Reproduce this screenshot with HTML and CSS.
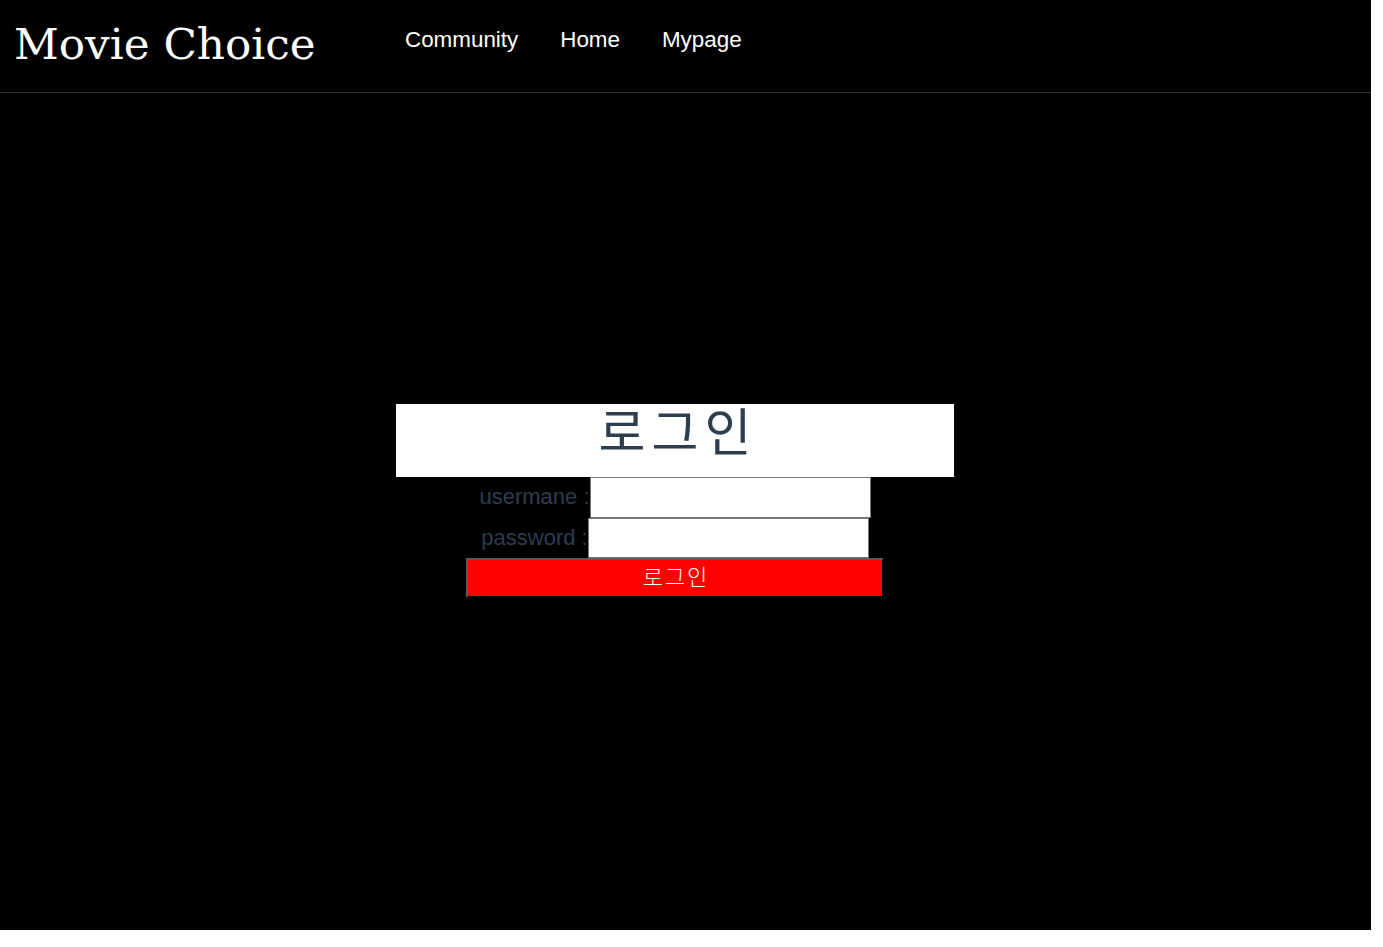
FILE: index.html
```html
<!DOCTYPE html>
<html lang="ko">
<head>
<meta charset="utf-8">
<title>Movie Choice</title>
<link rel="stylesheet" href="styles.css">
</head>
<body>
<div class="app">
  <header class="header">
    <div class="brand">Movie Choice</div>
    <nav class="nav">
      <a class="nav-link" href="#">Community</a>
      <a class="nav-link" href="#">Home</a>
      <a class="nav-link" href="#">Mypage</a>
    </nav>
  </header>
  <main class="main">
    <div class="title-box"><h1 class="title">로그인</h1></div>
    <div class="row">
      <label class="label" for="username">usermane :</label><input class="field" id="username" type="text">
    </div>
    <div class="row">
      <label class="label" for="password">password :</label><input class="field" id="password" type="password">
    </div>
    <button class="submit" type="button">로그인</button>
  </main>
</div>
</body>
</html>
```

FILE: styles.css
```css
html, body {
  margin: 0;
  padding: 0;
  background: #ffffff;
}

.app {
  width: 1371px;
  height: 930px;
  background: #000000;
  overflow: hidden;
}

.header {
  display: flex;
  align-items: flex-start;
  height: 92px;
  border-bottom: 1px solid #333333;
  padding-left: 14px;
  box-sizing: content-box;
}

.brand {
  flex: none;
  width: 301px;
  margin-top: 22px;
  font-family: "DejaVu Serif", "Liberation Serif", serif;
  font-size: 43.7px;
  line-height: 44px;
  color: #ffffff;
  white-space: nowrap;
}

.nav {
  display: flex;
  gap: 42px;
  margin-left: 90px;
  margin-top: 29px;
}

.nav-link {
  font-family: "Liberation Sans", Arial, sans-serif;
  font-size: 22.4px;
  line-height: 22px;
  color: #ffffff;
  text-decoration: none;
}

.main {
  width: 1350px;
  display: flex;
  flex-direction: column;
  align-items: center;
  padding-top: 311px;
}

.title-box {
  width: 558px;
  height: 73px;
  background: #ffffff;
  text-align: center;
}

.title {
  margin: 0;
  padding-left: 6px;
  font-family: "Noto Sans CJK KR", "Noto Sans", sans-serif;
  font-weight: 400;
  font-size: 51px;
  line-height: 50px;
  letter-spacing: 6px;
  color: #2c3e50;
}

.row {
  display: flex;
  align-items: center;
}

.label {
  font-family: "Liberation Sans", Arial, sans-serif;
  font-size: 22px;
  color: #2c3e50;
  white-space: nowrap;
}

.field {
  width: 281px;
  height: 40.5px;
  box-sizing: border-box;
  margin: 0;
  padding: 0 4px;
  border: 1px solid #767676;
  background: #ffffff;
  font-size: 16px;
}

.submit {
  width: 418px;
  height: 40px;
  box-sizing: border-box;
  margin: 0;
  padding: 0 0 6px 2px;
  background: #ff0000;
  border-style: solid;
  border-width: 2px;
  border-color: #5a5a5a #000000 #000000 #5a5a5a;
  color: #ffffff;
  font-family: "Noto Sans CJK KR", "Noto Sans", sans-serif;
  font-size: 22px;
  font-weight: 300;
  letter-spacing: 2px;
  line-height: 1;
}
```
